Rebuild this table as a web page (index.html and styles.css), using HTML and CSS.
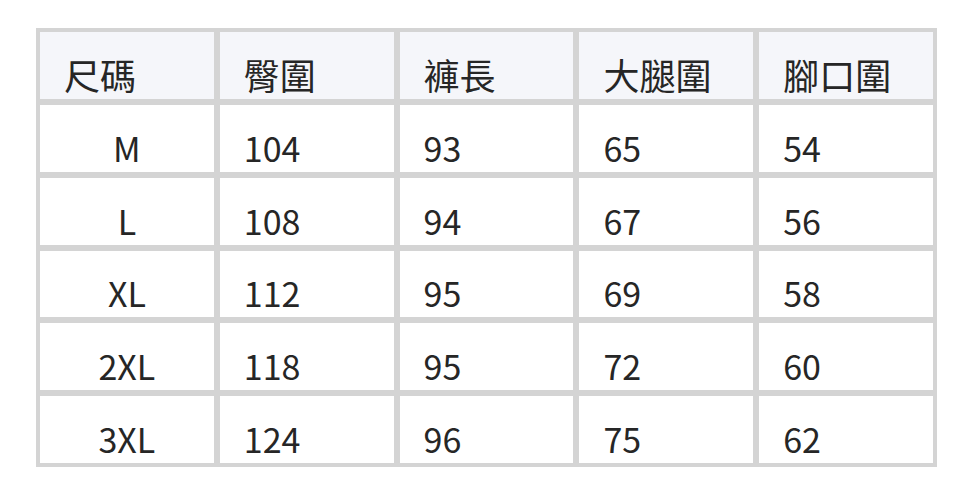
FILE: index.html
```html
<!DOCTYPE html>
<html lang="zh-Hant">
<head>
<meta charset="utf-8">
<link rel="stylesheet" href="styles.css">
</head>
<body>
<div class="size-table">
  <div class="cell head">尺碼</div>
  <div class="cell head">臀圍</div>
  <div class="cell head">褲長</div>
  <div class="cell head">大腿圍</div>
  <div class="cell head">腳口圍</div>

  <div class="cell size">M</div>
  <div class="cell">104</div>
  <div class="cell">93</div>
  <div class="cell">65</div>
  <div class="cell">54</div>

  <div class="cell size">L</div>
  <div class="cell">108</div>
  <div class="cell">94</div>
  <div class="cell">67</div>
  <div class="cell">56</div>

  <div class="cell size">XL</div>
  <div class="cell">112</div>
  <div class="cell">95</div>
  <div class="cell">69</div>
  <div class="cell">58</div>

  <div class="cell size">2XL</div>
  <div class="cell">118</div>
  <div class="cell">95</div>
  <div class="cell">72</div>
  <div class="cell">60</div>

  <div class="cell size">3XL</div>
  <div class="cell">124</div>
  <div class="cell">96</div>
  <div class="cell">75</div>
  <div class="cell">62</div>
</div>
</body>
</html>
```
FILE: styles.css
```css
html, body {
  margin: 0;
  background: #ffffff;
}
body {
  padding: 28px 0 0 36px;
  font-family: "Noto Sans CJK TC", "Noto Sans", sans-serif;
}
.size-table {
  box-sizing: border-box;
  width: 901px;
  height: 439px;
  padding: 4px;
  display: grid;
  grid-template-columns: repeat(5, 1fr);
  grid-template-rows: repeat(6, 1fr);
  gap: 6px;
  background: #d4d4d4;
}
.cell {
  background: #ffffff;
  display: flex;
  align-items: flex-end;
  padding-left: 24px;
  font-size: 34px;
  line-height: normal;
  color: #262626;
}
.cell.head {
  background: #f5f6fa;
  font-size: 36px;
  line-height: 1.32;
}
.cell.size {
  justify-content: center;
  padding-left: 0;
}
```
